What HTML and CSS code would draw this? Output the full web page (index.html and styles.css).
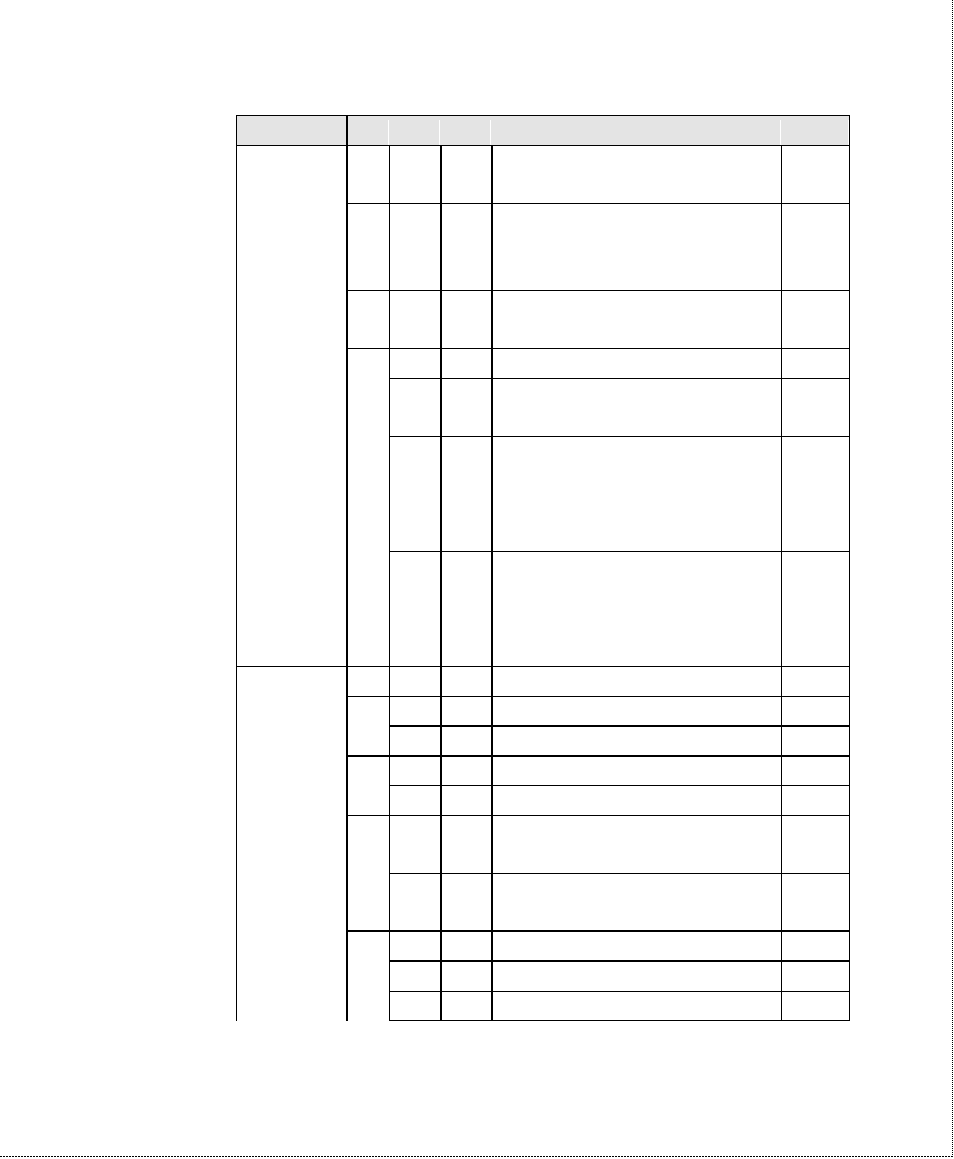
FILE: index.html
```html
<!DOCTYPE html>
<html lang="en">
<head>
<meta charset="utf-8">
<title>Table</title>
<link rel="stylesheet" href="styles.css">
</head>
<body>
<div class="page">
  <div class="tbl">
    <!-- header -->
    <div class="hd c1"></div>
    <div class="hd c2"><span class="mk m1"></span></div>
    <div class="hd c3"><span class="mk m2"></span></div>
    <div class="hd c4"><span class="mk m2"></span></div>
    <div class="hd c5"><span class="mk m1"></span></div>
    <div class="hd c6"><span class="mk"></span></div>

    <!-- R1 -->
    <div class="c1 s7"></div>
    <div class="c2"></div><div class="c3"></div><div class="c4"></div><div class="c5"></div><div class="c6"></div>
    <!-- R2 -->
    <div class="c2"></div><div class="c3"></div><div class="c4"></div><div class="c5"></div><div class="c6"></div>
    <!-- R3 -->
    <div class="c2"></div><div class="c3"></div><div class="c4"></div><div class="c5"></div><div class="c6"></div>
    <!-- R4 -->
    <div class="c2 s4"></div>
    <div class="c3"></div><div class="c4"></div><div class="c5"></div><div class="c6"></div>
    <!-- R5 -->
    <div class="c3"></div><div class="c4"></div><div class="c5"></div><div class="c6"></div>
    <!-- R6 -->
    <div class="c3"></div><div class="c4"></div><div class="c5"></div><div class="c6"></div>
    <!-- R7 -->
    <div class="c3"></div><div class="c4"></div><div class="c5"></div><div class="c6"></div>

    <!-- R8 -->
    <div class="c1 s10 nb"></div>
    <div class="c2"></div><div class="c3"></div><div class="c4"></div><div class="c5"></div><div class="c6"></div>
    <!-- R9 -->
    <div class="c2 s2 tk"></div>
    <div class="c3 tk"></div><div class="c4 tk"></div><div class="c5 tk"></div><div class="c6 tk"></div>
    <!-- R10 -->
    <div class="c3 tk"></div><div class="c4 tk"></div><div class="c5 tk"></div><div class="c6 tk"></div>
    <!-- R11 -->
    <div class="c2 s2"></div>
    <div class="c3"></div><div class="c4"></div><div class="c5"></div><div class="c6"></div>
    <!-- R12 -->
    <div class="c3"></div><div class="c4"></div><div class="c5"></div><div class="c6"></div>
    <!-- R13 -->
    <div class="c2 s2 tk"></div>
    <div class="c3"></div><div class="c4"></div><div class="c5"></div><div class="c6"></div>
    <!-- R14 -->
    <div class="c3 tk"></div><div class="c4 tk"></div><div class="c5 tk"></div><div class="c6 tk"></div>
    <!-- R15 -->
    <div class="c2 s3 nb"></div>
    <div class="c3 tk"></div><div class="c4 tk"></div><div class="c5 tk"></div><div class="c6 tk"></div>
    <!-- R16 -->
    <div class="c3"></div><div class="c4"></div><div class="c5"></div><div class="c6"></div>
    <!-- R17 -->
    <div class="c3"></div><div class="c4"></div><div class="c5"></div><div class="c6"></div>
  </div>
</div>
</body>
</html>
```
FILE: styles.css
```css
html, body {
  margin: 0;
  padding: 0;
  background: #ffffff;
  font-family: "Liberation Sans", Arial, sans-serif;
}

.page {
  width: 953px;
  height: 1157px;
  box-sizing: border-box;
  padding: 115px 0 0 236px;
  background:
    repeating-linear-gradient(to bottom, #000 0 1px, transparent 1px 2px) right top / 1px 1157px no-repeat,
    repeating-linear-gradient(to right, #000 0 2px, transparent 2px 3px) left bottom / 953px 1px no-repeat;
}

.tbl {
  display: grid;
  grid-template-columns: 111px 42px 52px 51px 289px 68px;
  grid-template-rows: 30px 58px 87px 58px 30px 58px 115px 115px 30px 30px 30px 29px 30px 58px 58px 30px 30px 29px;
  width: max-content;
  border-left: 1px solid #000;
  border-top: 1px solid #000;
}

.tbl > div {
  box-sizing: border-box;
  border-right: 1px solid #000;
  border-bottom: 1px solid #000;
}

.tbl > .c1,
.tbl > .c3,
.tbl > .c4 {
  border-right-width: 2px;
}

.tbl > .tk {
  border-bottom-width: 2px;
}

.tbl > .nb {
  border-bottom: none;
}

.s2 { grid-row: span 2; }
.s3 { grid-row: span 3; }
.s4 { grid-row: span 4; }
.s7 { grid-row: span 7; }
.s10 { grid-row: span 10; }

/* header row */
.tbl > .hd {
  background: #e4e4e4;
  display: flex;
  flex-direction: column;
}

.tbl > .hd.c2,
.tbl > .hd.c3,
.tbl > .hd.c4,
.tbl > .hd.c5 {
  border-right: none;
}

.mk {
  flex: 1;
  margin-top: 4px;
  border-right: 1px solid #ffffff;
}

.m1 { margin-right: 1px; }
.m2 { margin-right: 2px; }
```
